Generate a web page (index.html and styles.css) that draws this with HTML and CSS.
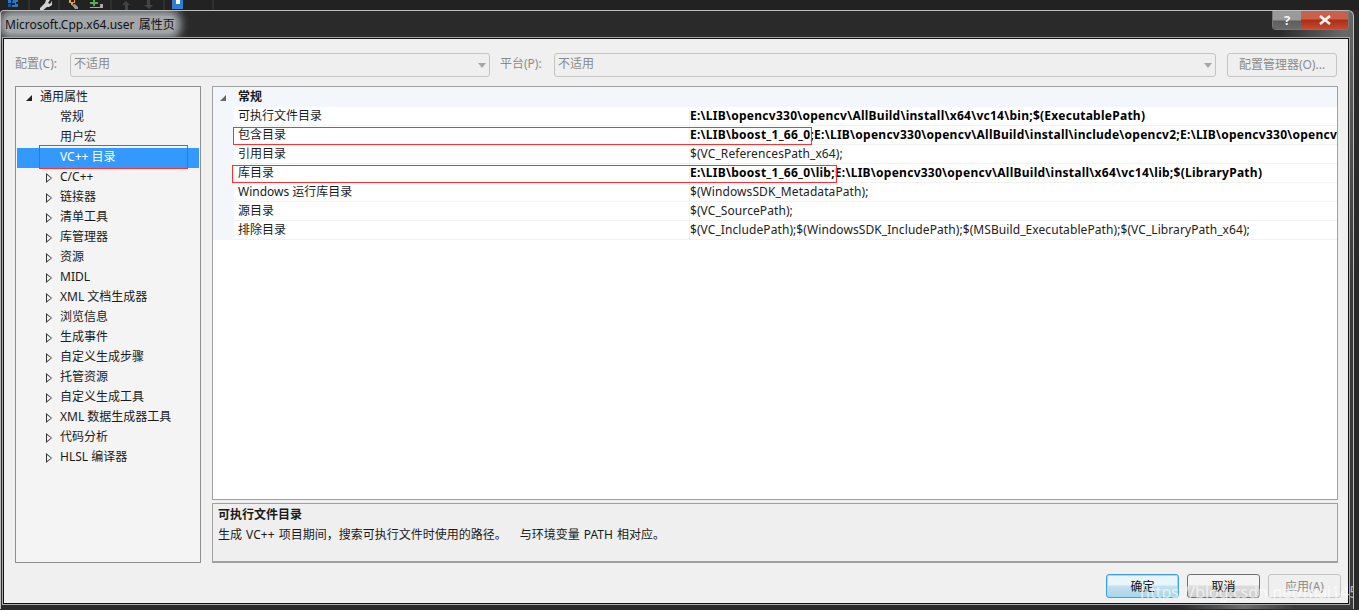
FILE: index.html
```html
<!DOCTYPE html>
<html lang="zh-CN">
<head>
    <meta charset="utf-8">
    <title>Microsoft.Cpp.x64.user 属性页</title>
    <link rel="stylesheet" href="styles.css">
</head>
<body>
    <div class="toolbar">
        <svg class="tool-icons" width="214" height="10" viewBox="0 0 214 10">
            <path d="M8 0h3v3H8zM13 0h5v2h-2v2h2v3h-6V5h3V3h-3z" fill="#2a78c8"/>
            <path d="M8 4h3v3H8z" fill="#1c558f"/>
            <path d="M29 0v10M59 0v10M111 0v10M164 0v10M213 0v10" stroke="#3e3e3e" fill="none"/>
            <path d="M40 8l5-5 1-3h4l-2 3 2 1 2-3v4l-3 2h-2l-5 4h-2z" fill="#d2d2d2"/>
            <path d="M69 0h2v2h3V0h1v3h-2v2h-2V3h-2z" fill="#d9a550"/>
            <path d="M72 5l3-1 3 3v2h-3z" fill="#9a9a9a"/>
            <path d="M90 2h3V0h2v2h3v2h-3v2h-2V4h-3z" fill="#4fb24a"/>
            <path d="M90 7h13v1H90zM100 4h3v3h-3z" fill="#a8a8a8"/>
            <path d="M126 1l-4 4h3v5h3V5h2z" fill="#444"/>
            <path d="M147 0h3v5h3l-4 4-5-4h3z" fill="#444"/>
            <path d="M172 0h11v9h-11z" fill="#2f7fd1"/>
            <path d="M176 0h4v4h-4z" fill="#fff"/>
        </svg>
    </div>

    <div class="window">
        <div class="titlebar">
            <span class="title">Microsoft.Cpp.x64.user 属性页</span>
            <div class="caption-btns">
                <span class="cap-btn help">?</span>
                <span class="cap-btn close">
                    <svg width="16" height="10" viewBox="0 0 16 10"><path d="M3 1l10 8M13 1L3 9" stroke="#f4f4f4" stroke-width="2.6" fill="none"/></svg>
                </span>
            </div>
        </div>

        <div class="dialog">
            <div class="config-row">
                <label class="cfg-label">配置(C):</label>
                <div class="select select-a">不适用<i class="arrow"></i></div>
                <label class="cfg-label plat">平台(P):</label>
                <div class="select select-b">不适用<i class="arrow"></i></div>
                <button class="btn btn-config" disabled>配置管理器(O)...</button>
            </div>

            <div class="main">
                <div class="tree">
                    <div class="node root"><i class="tri-open"></i>通用属性</div>
                    <div class="node leaf">常规</div>
                    <div class="node leaf">用户宏</div>
                    <div class="node leaf selected">VC++ 目录<span class="red-box box-tree"></span></div>
                    <div class="node"><i class="tri"></i>C/C++</div>
                    <div class="node"><i class="tri"></i>链接器</div>
                    <div class="node"><i class="tri"></i>清单工具</div>
                    <div class="node"><i class="tri"></i>库管理器</div>
                    <div class="node"><i class="tri"></i>资源</div>
                    <div class="node"><i class="tri"></i>MIDL</div>
                    <div class="node"><i class="tri"></i>XML 文档生成器</div>
                    <div class="node"><i class="tri"></i>浏览信息</div>
                    <div class="node"><i class="tri"></i>生成事件</div>
                    <div class="node"><i class="tri"></i>自定义生成步骤</div>
                    <div class="node"><i class="tri"></i>托管资源</div>
                    <div class="node"><i class="tri"></i>自定义生成工具</div>
                    <div class="node"><i class="tri"></i>XML 数据生成器工具</div>
                    <div class="node"><i class="tri"></i>代码分析</div>
                    <div class="node"><i class="tri"></i>HLSL 编译器</div>
                </div>

                <div class="right">
                    <div class="grid">
                        <div class="group"><i class="tri-open small"></i><b>常规</b></div>
                        <div class="row"><span class="name">可执行文件目录</span><span class="value bold">E:\LIB\opencv330\opencv\AllBuild\install\x64\vc14\bin;$(ExecutablePath)</span></div>
                        <div class="row"><span class="name">包含目录</span><span class="value bold">E:\LIB\boost_1_66_0;E:\LIB\opencv330\opencv\AllBuild\install\include\opencv2;E:\LIB\opencv330\opencv\AllBuild\install\include</span><span class="red-box box-inc"></span></div>
                        <div class="row"><span class="name">引用目录</span><span class="value">$(VC_ReferencesPath_x64);</span></div>
                        <div class="row"><span class="name">库目录</span><span class="value bold">E:\LIB\boost_1_66_0\lib;E:\LIB\opencv330\opencv\AllBuild\install\x64\vc14\lib;$(LibraryPath)</span><span class="red-box box-lib"></span></div>
                        <div class="row"><span class="name">Windows 运行库目录</span><span class="value">$(WindowsSDK_MetadataPath);</span></div>
                        <div class="row"><span class="name">源目录</span><span class="value">$(VC_SourcePath);</span></div>
                        <div class="row"><span class="name">排除目录</span><span class="value">$(VC_IncludePath);$(WindowsSDK_IncludePath);$(MSBuild_ExecutablePath);$(VC_LibraryPath_x64);</span></div>
                    </div>
                    <div class="desc">
                        <b>可执行文件目录</b>
                        <p>生成 VC++ 项目期间<span class="punct">，</span>搜索可执行文件时使用的路径<span class="punct stop">。</span>与环境变量 PATH 相对应。</p>
                    </div>
                </div>
            </div>

            <div class="footer">
                <button class="btn btn-ok">确定</button>
                <button class="btn btn-cancel">取消</button>
                <button class="btn btn-apply" disabled>应用(A)</button>
            </div>
            <span class="watermark">https://blog.csdn.net/mai145m</span>
        </div>
    </div>
</body>
</html>
```

FILE: styles.css
```css
* {
    box-sizing: border-box;
}

html, body {
    margin: 0;
    padding: 0;
    height: 610px;
    overflow: hidden;
}

body {
    background-color: #2a2a2a;
    font-family: "Noto Sans", "Noto Sans CJK SC", sans-serif;
    font-size: 12px;
    color: #1a1a1a;
}

.toolbar {
    height: 10px;
    background-color: #222;
    overflow: hidden;
}

.tool-icons {
    display: block;
}

.window {
    position: relative;
    width: 1354px;
    height: 599px;
    border: 1px solid #bdbdbd;
    border-bottom: 0;
    border-radius: 4px 6px 0 0;
    background: linear-gradient(100deg, #2a2a2a 88%, #6a6a6a 92.5%, #3a3a3a 96%);
    overflow: hidden;
}

.titlebar {
    height: 27px;
    padding-left: 4px;
    display: flex;
    align-items: center;
}

.title {
    font-size: 12px;
    color: #111;
    line-height: 17px;
    word-spacing: 1px;
    background-color: #a3a6a9;
    box-shadow: 0 0 9px 6px #a3a6a9;
    border-radius: 6px;
}

.caption-btns {
    position: absolute;
    top: 0;
    right: 4px;
    display: flex;
    height: 19px;
    border: 1px solid #777;
    border-top: 0;
    border-radius: 0 0 4px 4px;
    overflow: hidden;
}

.cap-btn {
    height: 18px;
    display: flex;
    align-items: center;
    justify-content: center;
    color: #f4f4f4;
    font-weight: bold;
    line-height: 18px;
    font-size: 13px;
}

.help {
    width: 28px;
    background: linear-gradient(#9a9a9a 50%, #5e5e5e 55%, #6a6a6a);
}

.close {
    width: 47px;
    background: linear-gradient(#c8604c 45%, #b02c14 50%, #c44a32);
}

.dialog {
    position: relative;
    margin-left: 2px;
    width: 1346px;
    height: 566px;
    background-color: #f0f0f0;
    border: 1px solid #111;
    outline: 1px solid #aaa;
    padding: 14px 11px 0 11px;
}

.config-row {
    display: flex;
    align-items: center;
    height: 24px;
}

.cfg-label {
    width: 55px;
    color: #8a8a8a;
    line-height: 22px;
    margin-top: -2px;
}

.plat {
    width: 54px;
    margin-left: 10px;
}

.select {
    position: relative;
    height: 24px;
    line-height: 20px;
    padding-left: 3px;
    color: #8a8a8a;
    border: 1px solid #c4c4c4;
    border-radius: 3px;
    background-color: #efefef;
}

.select-a {
    width: 420px;
}

.select-b {
    width: 662px;
}

.arrow {
    position: absolute;
    right: 3px;
    top: 9px;
    border-left: 4px solid transparent;
    border-right: 4px solid transparent;
    border-top: 5px solid #a6a6a6;
}

.btn {
    font-family: inherit;
    font-size: 12px;
    height: 24px;
    width: 73px;
    padding: 0;
    border: 1px solid #707070;
    border-radius: 3px;
    color: #111;
    background: linear-gradient(#f4f4f4 45%, #dcdcdc 50%, #cfcfcf);
}

.btn[disabled] {
    color: #8a8a8a;
    border-color: #c4c4c4;
    background: #efefef;
}

.btn-config {
    width: 110px;
    margin-left: 11px;
    padding-bottom: 3px;
}

.main {
    display: flex;
    margin-top: 9px;
    height: 477px;
}

.tree {
    width: 186px;
    flex-shrink: 0;
    height: 477px;
    margin-right: 11px;
    padding: 1px;
    background-color: #f4f4f4;
    border: 1px solid #8e8f8f;
}

.node {
    position: relative;
    height: 20px;
    line-height: 18px;
    padding-left: 43px;
    white-space: nowrap;
}

.node.root {
    padding-left: 23px;
}

.node.selected {
    background-color: #3399ff;
    color: #fff;
}

.tri {
    position: absolute;
    left: 29px;
    top: 5px;
    width: 0;
    height: 0;
    border-left: 6px solid #333;
    border-top: 5px solid transparent;
    border-bottom: 5px solid transparent;
}

.tri::after {
    content: "";
    position: absolute;
    left: -5px;
    top: -3px;
    border-left: 4px solid #f4f4f4;
    border-top: 3px solid transparent;
    border-bottom: 3px solid transparent;
}

.tri-open {
    position: absolute;
    left: 9px;
    top: 7px;
    border-left: 6px solid transparent;
    border-bottom: 6px solid #222;
}

.tri-open.small {
    left: 7px;
    top: 8px;
    border-bottom-color: #666;
}

.right {
    width: 1126px;
    flex-shrink: 0;
    display: flex;
    flex-direction: column;
}

.grid {
    height: 415px;
    background-color: #fff;
    border: 1px solid #a0a0a0;
    overflow: hidden;
}

.group {
    position: relative;
    height: 20px;
    line-height: 20px;
    padding-left: 25px;
    background-color: #f3f6fb;
}

.row {
    position: relative;
    height: 19px;
    line-height: 18px;
    margin-left: 21px;
    display: flex;
    white-space: nowrap;
    box-shadow: -21px 0 0 #f3f6fb;
    border-bottom: 1px solid #f2f2f2;
}

.name {
    width: 456px;
    padding-left: 4px;
    flex-shrink: 0;
    border-right: 1px solid #f2f2f2;
}

.value {
    color: #222;
    letter-spacing: 0.08px;
}

.value.bold {
    font-weight: bold;
    color: #000;
    letter-spacing: 0.26px;
}

.red-box {
    position: absolute;
    border: 1px solid #ff3030;
}

.box-tree {
    left: 22px;
    top: -3px;
    width: 149px;
    height: 24px;
}

.box-inc {
    left: -1px;
    top: 1px;
    width: 579px;
    height: 18px;
}

.box-lib {
    left: -2px;
    top: 1px;
    width: 605px;
    height: 18px;
}

.desc {
    height: 60px;
    margin-top: 3px;
    padding: 1px 5px;
    background-color: #efefef;
    border: 1px solid #a0a0a0;
    border-bottom-width: 2px;
    line-height: 19px;
}

.desc p {
    margin: 0;
    word-spacing: 1px;
}

.punct {
    display: inline-block;
    width: 12px;
    text-align: center;
    font-family: "Noto Sans CJK SC", sans-serif;
}

.punct.stop {
    width: 25px;
    text-align: left;
}

.footer {
    display: flex;
    justify-content: flex-end;
    gap: 8px;
    margin-top: 11px;
    margin-right: -4px;
}

.btn-ok {
    border-color: #3c9fd8;
    box-shadow: inset 0 0 0 1px #9edcf7;
    background: linear-gradient(#e8f5fc 45%, #c5e2f1 50%, #a9d3e8);
}

.watermark {
    position: absolute;
    left: 1136px;
    top: 542px;
    font-size: 16px;
    color: rgba(255, 255, 255, 0.65);
    white-space: nowrap;
}
```
